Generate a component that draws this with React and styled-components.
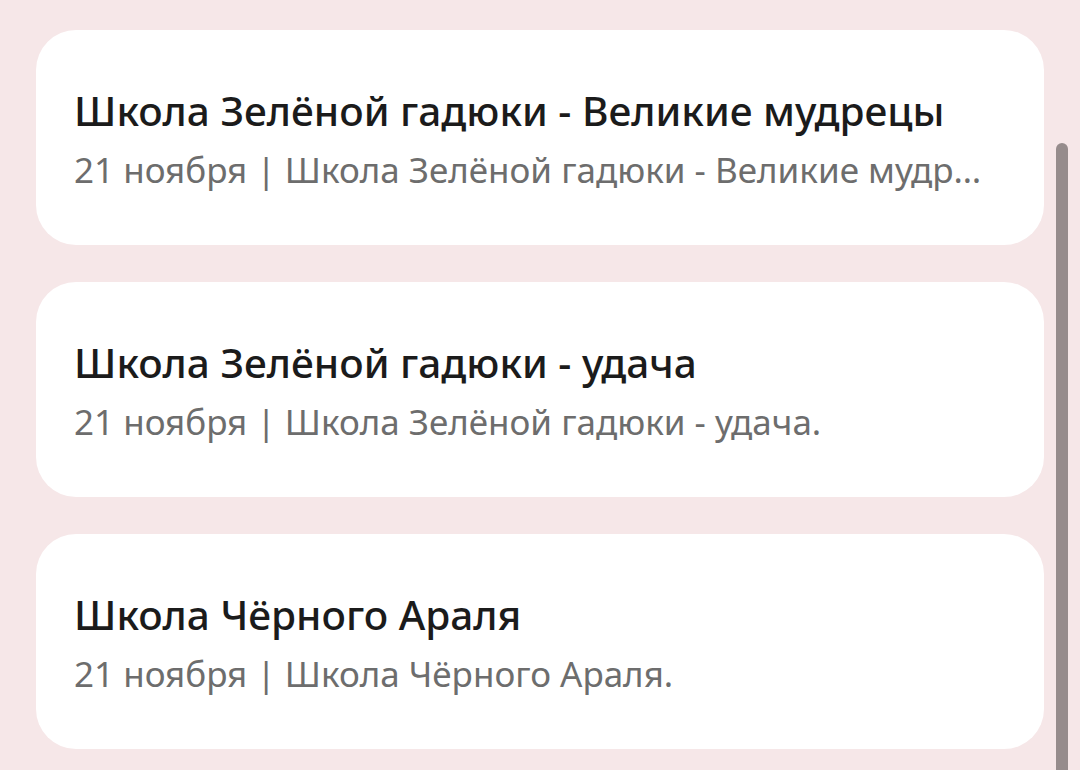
import React from 'react'
import styled, { createGlobalStyle } from 'styled-components'

const GlobalStyle = createGlobalStyle`
  html, body {
    margin: 0;
    padding: 0;
    background: #f6e7e8;
    overflow: hidden;
  }
`

const Page = styled.div`
  position: relative;
  width: 1080px;
  height: 770px;
  box-sizing: border-box;
  padding: 30px 36px 0 36px;
  display: flex;
  flex-direction: column;
  gap: 37px;
  background: #f6e7e8;
  font-family: 'Noto Sans', 'Roboto', sans-serif;
`

const Card = styled.div`
  width: 1008px;
  height: 215px;
  box-sizing: border-box;
  padding: 2px 56px 0 38px;
  background: #ffffff;
  border-radius: 40px;
  display: flex;
  flex-direction: column;
  justify-content: center;
  gap: 10px;
  flex-shrink: 0;
`

const Title = styled.div`
  font-size: 40.6px;
  font-weight: 500;
  color: #1b1b1b;
  line-height: 52px;
  white-space: nowrap;
`

const Subtitle = styled.div`
  font-size: 35px;
  color: #6d6d6d;
  line-height: 46px;
  white-space: nowrap;
  overflow: hidden;
  text-overflow: ellipsis;
`

const ScrollThumb = styled.div`
  position: absolute;
  left: 1056px;
  top: 143px;
  width: 12px;
  height: 640px;
  border-radius: 6px;
  background: #968c8c;
`

const items = [
  {
    title: 'Школа Зелёной гадюки - Великие мудрецы',
    sub: '21 ноября | Школа Зелёной гадюки - Великие мудрецы.',
  },
  {
    title: 'Школа Зелёной гадюки - удача',
    sub: '21 ноября | Школа Зелёной гадюки - удача.',
  },
  {
    title: 'Школа Чёрного Араля',
    sub: '21 ноября | Школа Чёрного Араля.',
  },
]

export default function App() {
  return (
    <>
      <GlobalStyle />
      <Page>
        {items.map((item) => (
          <Card key={item.title}>
            <Title>{item.title}</Title>
            <Subtitle>{item.sub}</Subtitle>
          </Card>
        ))}
        <ScrollThumb />
      </Page>
    </>
  )
}
